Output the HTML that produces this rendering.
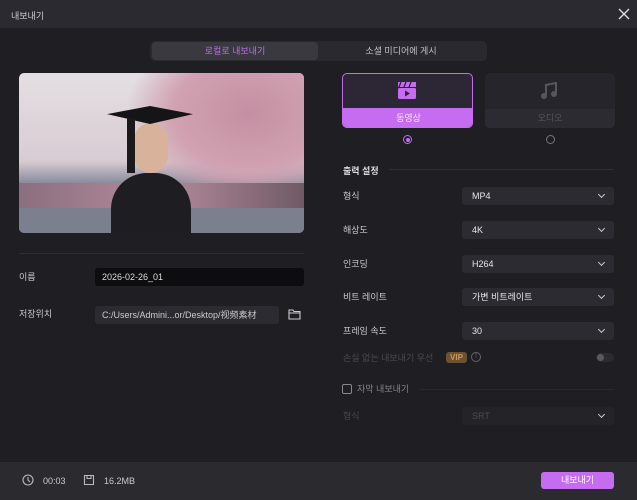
<!DOCTYPE html>
<html><head><meta charset="utf-8"><style>
*{margin:0;padding:0;box-sizing:border-box}
body{width:637px;height:500px;background:#1f1e23;font-family:"Liberation Sans","Noto Sans CJK KR",sans-serif;font-size:9px;color:#c9c9cf;position:relative;overflow:hidden}
.a{position:absolute}
.sel{position:absolute;left:462px;width:152px;height:18px;background:#2c2b31;border-radius:3px;color:#e6e6ea;padding-left:10px;line-height:18px;font-size:9px}
.sel:after{content:"";position:absolute;right:10px;top:5px;width:4px;height:4px;border-right:1.5px solid #ccc;border-bottom:1.5px solid #ccc;transform:rotate(45deg)}
.lbl{position:absolute;left:343px;color:#c9c9cf;line-height:18px}
</style></head><body>
<div class="a" style="left:0;top:0;width:637px;height:28px;background:#2b2a30"></div>
<div class="a" style="left:11px;top:9px;color:#cfcfd4">내보내기</div>
<svg class="a" style="left:618px;top:8px" width="12" height="12"><path d="M1 1L11 11M11 1L1 11" stroke="#ddd" stroke-width="1.4"/></svg>
<div class="a" style="left:150px;top:41px;width:337px;height:20px;background:#2a292f;border-radius:5px"></div>
<div class="a" style="left:152px;top:42px;width:166px;height:18px;background:#3a3940;border-radius:4px;color:#b870e8;text-align:center;line-height:18px">로컬로 내보내기</div>
<div class="a" style="left:318px;top:42px;width:166px;height:18px;color:#c0c0c6;text-align:center;line-height:18px">소셜 미디어에 게시</div>
<div class="a" style="left:19px;top:73px;width:285px;height:160px;border-radius:5px;overflow:hidden;background:linear-gradient(180deg,#e4dfe2 0%,#d8ccd3 55%,#8d8fa0 68%,#6b6d7c 100%)">
 <div class="a" style="left:110px;top:-20px;width:200px;height:150px;background:radial-gradient(ellipse at 60% 40%,#c48fa2 0%,#d1a2b2 45%,rgba(220,190,200,0) 72%)"></div>
 <div class="a" style="left:0;top:110px;width:285px;height:30px;background:linear-gradient(90deg,#8a6f7e,#b48b9d,#705a66)"></div>
 <div class="a" style="left:0;top:135px;width:285px;height:25px;background:#7c7f8e"></div>
 <div class="a" style="left:92px;top:100px;width:80px;height:65px;background:#1e1d21;border-radius:36px 36px 0 0"></div>
 <div class="a" style="left:115px;top:50px;width:34px;height:50px;background:#d9b29c;border-radius:17px"></div>
 <div class="a" style="left:88px;top:33px;width:86px;height:18px;background:#151416;clip-path:polygon(0 45%,50% 0,100% 45%,50% 100%)"></div>
 <div class="a" style="left:108px;top:45px;width:8px;height:55px;background:#1a191b"></div>
</div>
<div class="a" style="left:19px;top:253px;width:285px;height:1px;background:#2f2e34"></div>
<div class="a" style="left:19px;top:268px;line-height:18px">이름</div>
<div class="a" style="left:95px;top:268px;width:209px;height:18px;background:#0d0d10;border-radius:3px;color:#ddd;padding-left:7px;line-height:18px">2026-02-26_01</div>
<div class="a" style="left:19px;top:305px;line-height:18px">저장위치</div>
<div class="a" style="left:95px;top:306px;width:184px;height:18px;background:#2c2b31;border-radius:3px;color:#ccc;padding-left:7px;line-height:18px;white-space:nowrap;overflow:hidden">C:/Users/Admini...or/Desktop/视频素材</div>
<svg class="a" style="left:288px;top:308px" width="13" height="12"><path d="M1 2h4l1 1.5h6v7.5h-11z M1 5h11" fill="none" stroke="#ccc" stroke-width="1.1"/></svg>
<div class="a" style="left:342px;top:73px;width:131px;height:55px;border:1.5px solid #c56cf0;border-radius:5px;background:#2d2735;overflow:hidden">
 <div class="a" style="left:0;top:34px;width:131px;height:20px;background:#c56cf0;color:#f3e6fb;text-align:center;line-height:20px">동영상</div>
 <svg class="a" style="left:54px;top:7px" width="20" height="20"><rect x="1" y="1" width="18" height="5" fill="#c56cf0"/><path d="M4 1l-2 5M9 1l-2 5M14 1l-2 5" stroke="#2d2735" stroke-width="1.3"/><rect x="1" y="7" width="18" height="11" rx="1.5" fill="#c56cf0"/><path d="M8 9.5v6l5-3z" fill="#2d2735"/></svg>
</div>
<div class="a" style="left:485px;top:73px;width:130px;height:55px;border-radius:5px;background:#26252b;overflow:hidden">
 <div class="a" style="left:0;top:36px;width:130px;height:19px;background:#2c2b31;color:#55545a;text-align:center;line-height:19px">오디오</div>
 <svg class="a" style="left:55px;top:9px" width="18" height="18"><path d="M6 13V3l10-2v10" fill="none" stroke="#57565c" stroke-width="2"/><circle cx="4" cy="14" r="3" fill="#57565c"/><circle cx="14" cy="12" r="3" fill="#57565c"/></svg>
</div>
<div class="a" style="left:403px;top:135px;width:9px;height:9px;border:1.2px solid #c56cf0;border-radius:50%"><div class="a" style="left:1.5px;top:1.5px;width:4px;height:4px;background:#c56cf0;border-radius:50%"></div></div>
<div class="a" style="left:546px;top:135px;width:9px;height:9px;border:1px solid #77767c;border-radius:50%"></div>
<div class="a" style="left:343px;top:164px;font-weight:bold;color:#dcdce0">출력 설정</div>
<div class="a" style="left:389px;top:169px;width:225px;height:1px;background:#2f2e34"></div>
<div class="lbl" style="top:187px">형식</div><div class="sel" style="top:187px">MP4</div>
<div class="lbl" style="top:221px">해상도</div><div class="sel" style="top:221px">4K</div>
<div class="lbl" style="top:255px">인코딩</div><div class="sel" style="top:255px">H264</div>
<div class="lbl" style="top:288px">비트 레이트</div><div class="sel" style="top:288px">가변 비트레이트</div>
<div class="lbl" style="top:322px">프레임 속도</div><div class="sel" style="top:322px">30</div>
<div class="lbl" style="top:349px;color:#4a494f">손실 없는 내보내기 우선</div>
<div class="a" style="left:446px;top:352px;width:21px;height:11px;background:#6b5230;color:#c99a5a;border-radius:3px;font-size:8px;font-weight:bold;text-align:center;line-height:11px">VIP</div>
<div class="a" style="left:471px;top:352px;width:10px;height:10px;border:1px solid #66656b;border-radius:50%;color:#66656b;font-size:7px;text-align:center;line-height:8px">!</div>
<div class="a" style="left:596px;top:353px;width:18px;height:9px;background:#2c2b31;border-radius:5px"><div class="a" style="left:1px;top:1px;width:7px;height:7px;background:#5a595f;border-radius:50%"></div></div>
<div class="a" style="left:342px;top:384px;width:10px;height:10px;border:1px solid #88878d;border-radius:2px"></div>
<div class="a" style="left:357px;top:380px;color:#85848a;line-height:18px">자막 내보내기</div>
<div class="a" style="left:420px;top:389px;width:194px;height:1px;background:#2a292f"></div>
<div class="lbl" style="top:407px;color:#48474d">형식</div><div class="sel" style="top:407px;background:#242328;color:#4c4b51">SRT</div>
<div class="a" style="left:0;top:462px;width:637px;height:38px;background:#2a2a2f"></div>
<svg class="a" style="left:22px;top:474px" width="12" height="12"><circle cx="6" cy="6" r="5" fill="none" stroke="#bbb" stroke-width="1.1"/><path d="M6 3v3l2 2" fill="none" stroke="#bbb" stroke-width="1.1"/></svg>
<div class="a" style="left:43px;top:472px;color:#c9c9cf;line-height:18px">00:03</div>
<svg class="a" style="left:83px;top:474px" width="12" height="12"><path d="M1.5 1.5h9v9h-9z M4 1.5v3h4v-3" fill="none" stroke="#bbb" stroke-width="1.1"/></svg>
<div class="a" style="left:104px;top:472px;color:#c9c9cf;line-height:18px">16.2MB</div>
<div class="a" style="left:541px;top:472px;width:73px;height:17px;background:#c56cf0;border-radius:3px;color:#fff;text-align:center;line-height:17px">내보내기</div>
</body></html>
